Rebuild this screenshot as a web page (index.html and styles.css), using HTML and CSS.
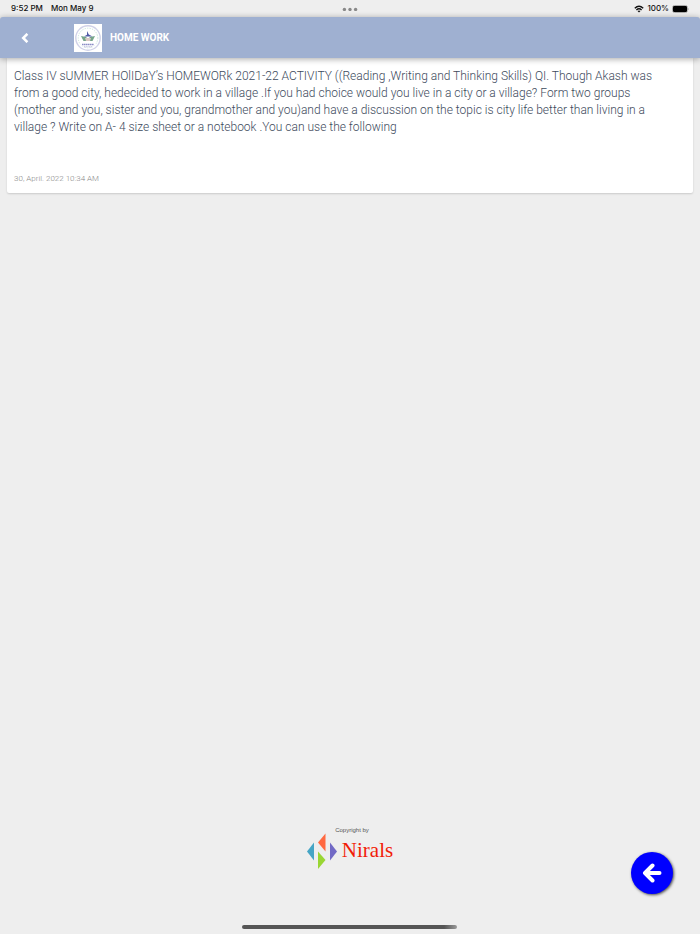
FILE: index.html
```html
<!DOCTYPE html>
<html lang="en">
<head>
    <meta charset="UTF-8">
    <meta name="viewport" content="width=device-width, initial-scale=1.0">
    <title>Home Work</title>
    <link rel="stylesheet" href="styles.css">
</head>
<body>
    <!-- Status bar -->
    <div class="status-bar">
        <div class="status-left">
            <span>9:52 PM</span>
            <span>Mon May 9</span>
        </div>
        <svg class="dots" width="16" height="4" viewBox="0 0 16 4">
            <circle cx="2.4" cy="2.4" r="1.7"/>
            <circle cx="8" cy="2.4" r="1.7"/>
            <circle cx="13.6" cy="2.4" r="1.7"/>
        </svg>
        <div class="status-right">
            <svg width="10" height="8" viewBox="0 0 10 8">
                <path d="M0.8 3.2Q5 -0.9 9.2 3.2M2.4 4.9Q5 2.5 7.6 4.9" fill="none" stroke="#111" stroke-width="1.4"/>
                <path d="M3.5 6Q5 4.8 6.5 6L5 7.6Z" fill="#111"/>
            </svg>
            <span>100%</span>
            <svg width="17" height="8" viewBox="0 0 17 8">
                <rect x="0.5" y="0.5" width="15" height="7" rx="2" fill="none" stroke="#aaa"/>
                <rect x="1" y="1" width="14" height="6" rx="1.2" fill="#000"/>
                <path d="M16 2.7Q17.2 4 16 5.3Z" fill="#999"/>
            </svg>
        </div>
    </div>

    <header class="header">
        <button type="button" class="back" aria-label="Back">
            <svg width="8" height="10" viewBox="0 0 8 10">
                <path d="M6.4 0.8L2.2 5L6.4 9.2" fill="none" stroke="#fff" stroke-width="2.5"/>
            </svg>
        </button>
        <svg class="school-logo" width="28" height="28" viewBox="0 0 28 28">
            <rect width="28" height="28" fill="#fff"/>
            <circle cx="14" cy="14" r="12.2" fill="#fff" stroke="#d0d2e8" stroke-width="1.4"/>
            <circle cx="14" cy="14" r="9.8" fill="none" stroke="#c5e3dc" stroke-width="1" stroke-dasharray="1.2 1.3"/>
            <path d="M6.5 21Q14 26 21.5 21V18H6.5Z" fill="#fff"/>
            <path d="M7 12L12 13L14 15L16 13L21 12L18.5 17H9.5Z" fill="#75a58a"/>
            <path d="M11 14H17L16 17H12Z" fill="#d9c9c4"/>
            <path d="M13 7L14.8 10.5L18.5 12.5H10L13 10.8Z" fill="#4f5aa5"/>
            <path d="M8 20.6H20" stroke="#8a8dc6" stroke-width="1.5" stroke-dasharray="1.6 0.4"/>
            <path d="M10 22.8H18" stroke="#b4b6da" stroke-width="1" stroke-dasharray="1.2 0.5"/>
        </svg>
        <h1>HOME WORK</h1>
    </header>

    <main>
        <article class="card">
            <p class="message">Class IV sUMMER HOlIDaY’s HOMEWORk 2021-22 ACTIVITY ((Reading ,Writing and Thinking Skills) QI. Though Akash was from a good city, hedecided to work in a village .If you had choice would you live in a city or a village? Form two groups (mother and you, sister and you, grandmother and you)and have a discussion on the topic is city life better than living in a village ? Write on A- 4 size sheet or a notebook .You can use the following</p>
            <time class="date" datetime="2022-04-30T10:34">30, April. 2022 10:34 AM</time>
        </article>
    </main>

    <footer class="footer">
        <div class="copyright">Copyright by</div>
        <div class="brand">
            <svg width="30" height="36" viewBox="0 0 30 36">
                <path d="M0 18.5L7 9.5V27.5Z" fill="#45a5c5"/>
                <path d="M11 9.5L18.5 0.5V18.5Z" fill="#ff6941"/>
                <path d="M23 9.5L30 18.5L23 27.5Z" fill="#7169c5"/>
                <path d="M11 18.5L18.5 27L11 36Z" fill="#99d633"/>
            </svg>
            <span>Nirals</span>
        </div>
    </footer>

    <button type="button" class="fab" aria-label="Go back">
        <svg width="20" height="20" viewBox="0 0 20 20">
            <path d="M10.5 2.5L3 10L10.5 17.5M3.5 10H17.5" fill="none" stroke="#fff" stroke-width="4" stroke-linecap="round" stroke-linejoin="round"/>
        </svg>
    </button>
    <div class="home-bar"></div>
</body>
</html>
```

FILE: styles.css
```css
* {
    box-sizing: border-box;
}
body {
    margin: 0;
    min-height: 100vh;
    display: flex;
    flex-direction: column;
    background-color: #eee;
    font-family: Roboto, sans-serif;
}
button {
    padding: 0;
    border: none;
    cursor: pointer;
}
svg {
    display: block;
}

/* Status bar */
.status-bar {
    display: grid;
    grid-template-columns: 1fr auto 1fr;
    align-items: center;
    height: 17px;
    padding: 0 11px;
    font-family: Inter, sans-serif;
    font-size: 8px;
    line-height: 17px;
    font-weight: 500;
    color: #111;
}
.status-left {
    display: flex;
    gap: 8px;
}
.status-right {
    display: flex;
    justify-content: flex-end;
    align-items: center;
    gap: 3px;
}
.dots {
    fill: #888;
}

/* Header */
.header {
    position: relative;
    display: flex;
    align-items: center;
    height: 41px;
    padding: 0 16px;
    border-radius: 3px 3px 0 0;
    background-color: #9fb0d1;
    box-shadow: 0 1px 6px rgba(0, 0, 0, 0.35);
}
.back {
    display: flex;
    align-items: center;
    justify-content: center;
    width: 18px;
    height: 28px;
    margin-right: 40px;
    background: none;
}
.header h1 {
    margin: 0 0 0 8px;
    font-size: 10px;
    line-height: 14px;
    font-weight: 700;
    color: #fff;
}

/* Message card */
.card {
    margin: 0 7px;
    padding: 10px 28px 8px 7px;
    border-radius: 0 0 2px 2px;
    background-color: #fff;
    box-shadow: 0 1px 2px rgba(0, 0, 0, 0.15);
}
.message {
    margin: 0 0 37px;
    font-size: 12px;
    line-height: 17px;
    font-weight: 300;
    color: #3d4a5c;
}
.date {
    display: block;
    font-size: 8px;
    line-height: 12px;
    font-weight: 300;
    color: #888;
}

/* Footer */
.footer {
    display: flex;
    flex-direction: column;
    align-items: center;
    margin-top: auto;
    padding-bottom: 67px;
}
.copyright {
    padding-left: 4px;
    font-family: "Liberation Sans", Arial, sans-serif;
    font-size: 6px;
    line-height: 8px;
    color: #555;
}
.brand {
    display: flex;
    align-items: center;
    gap: 5px;
    height: 33px;
    font-family: "Liberation Serif", "Times New Roman", serif;
    font-size: 21px;
    line-height: 33px;
    color: #f21d08;
}
.fab {
    position: fixed;
    right: 27px;
    bottom: 40px;
    display: flex;
    align-items: center;
    justify-content: center;
    width: 42px;
    height: 42px;
    border-radius: 50%;
    background-color: #00f;
    box-shadow: 1px 1px 3px rgba(0, 0, 0, 0.7);
}
.home-bar {
    position: fixed;
    bottom: 5px;
    left: 50%;
    width: 215px;
    height: 4px;
    margin-left: -108px;
    border-radius: 2px;
    background: linear-gradient(to right, #555 94%, #999);
}
```
